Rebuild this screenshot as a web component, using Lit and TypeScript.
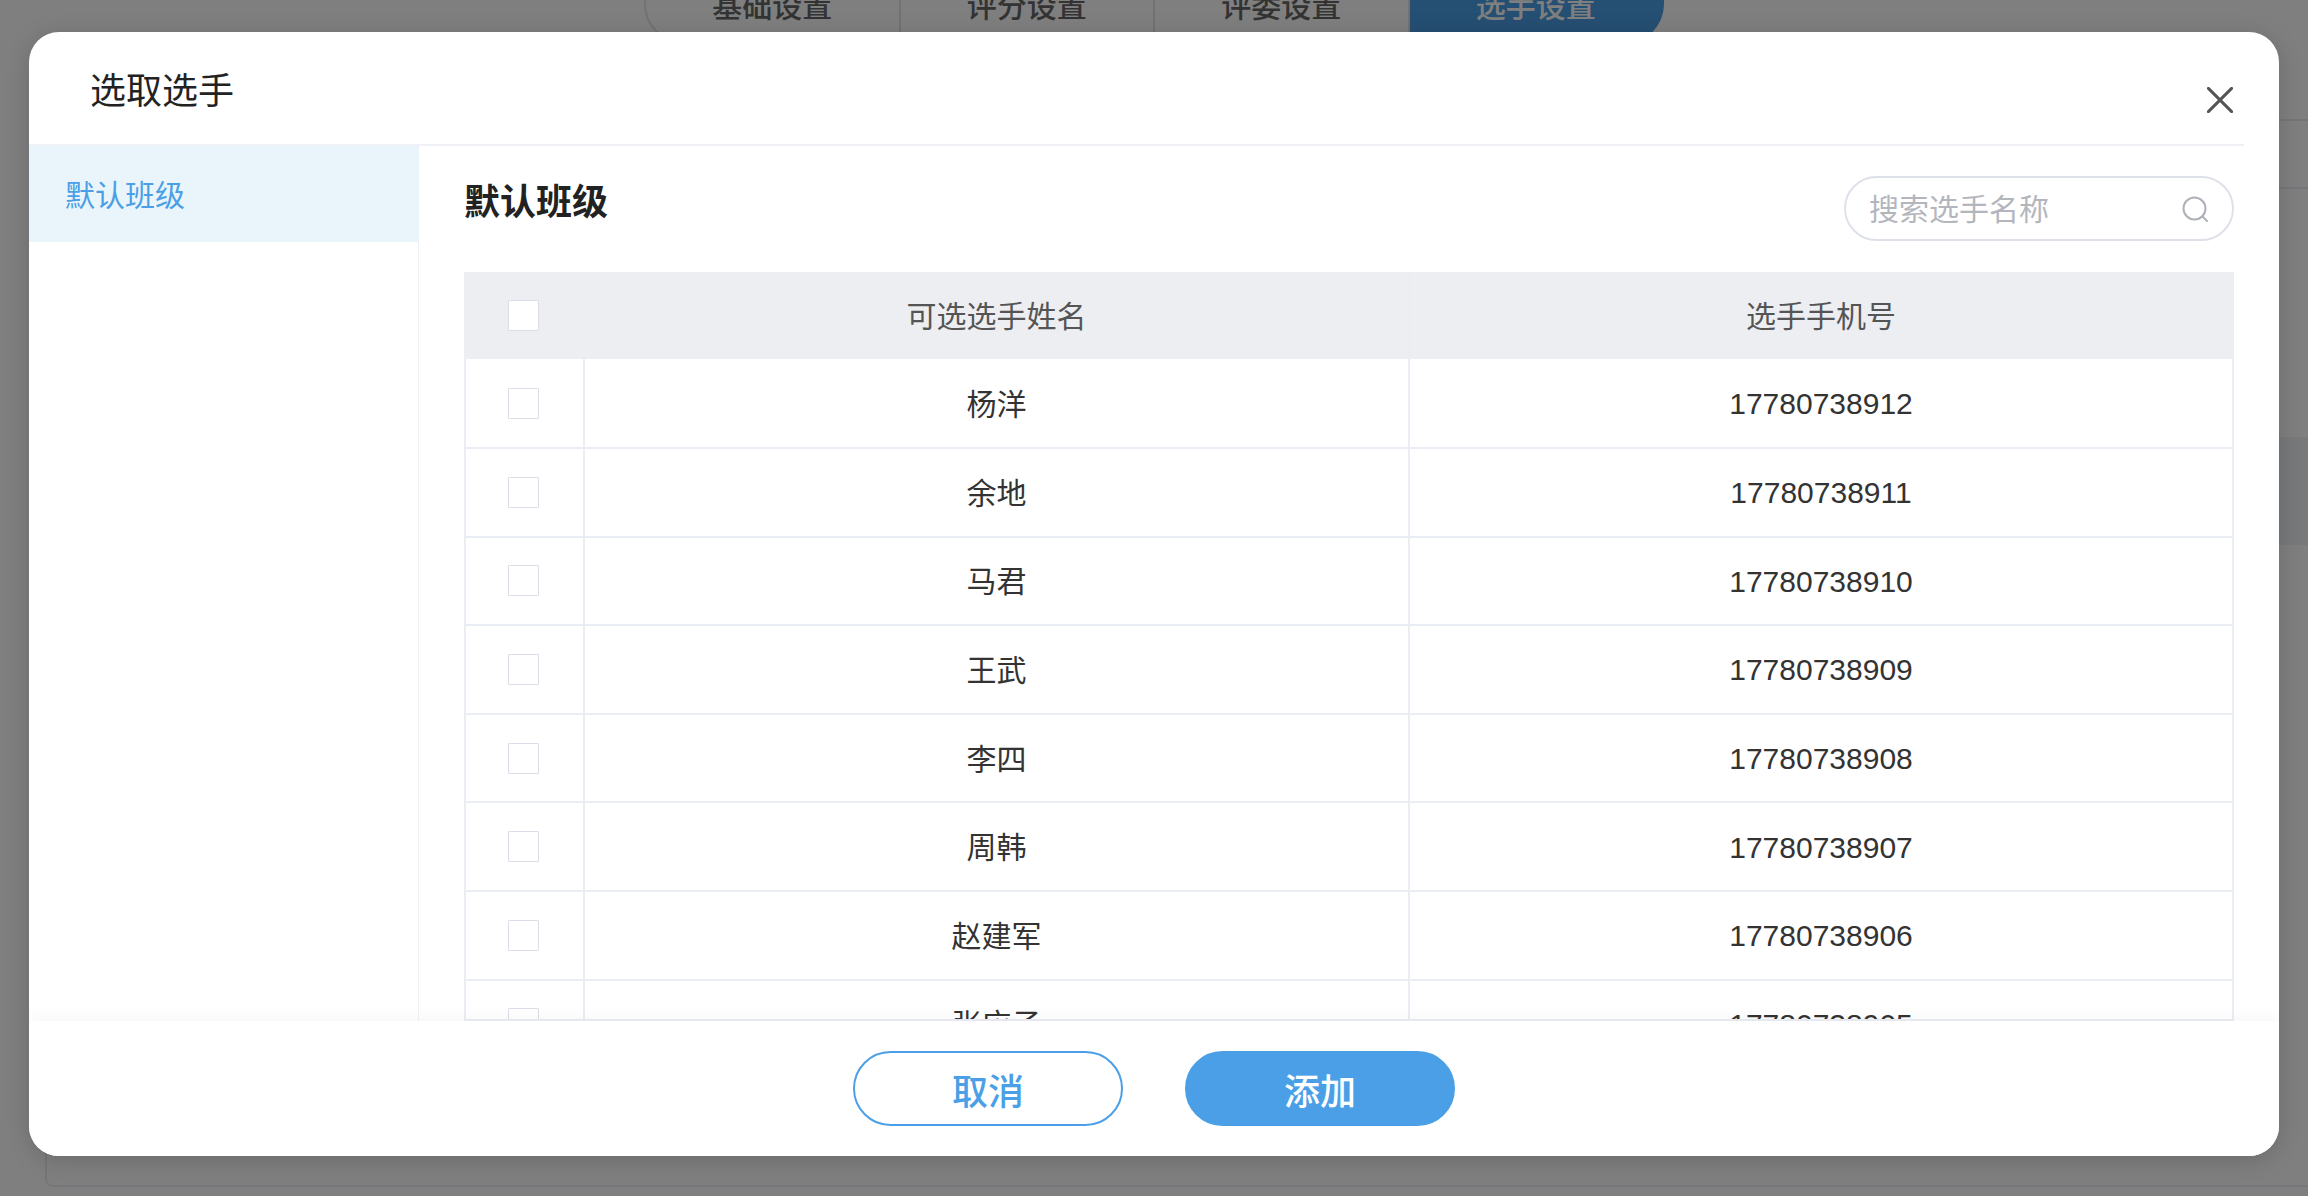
import { LitElement, css, html } from 'lit'
import { customElement } from 'lit/decorators.js'

const players = [
  { name: '杨洋', phone: '17780738912' },
  { name: '余地', phone: '17780738911' },
  { name: '马君', phone: '17780738910' },
  { name: '王武', phone: '17780738909' },
  { name: '李四', phone: '17780738908' },
  { name: '周韩', phone: '17780738907' },
  { name: '赵建军', phone: '17780738906' },
  { name: '张应子', phone: '17780738905' },
]

const tabs = ['基础设置', '评分设置', '评委设置', '选手设置']

@customElement('app-root')
export class AppRoot extends LitElement {
  static styles = css`
    :host {
      display: block;
      font-family: "Liberation Sans", "Noto Sans CJK SC", sans-serif;
    }
    .page {
      position: relative;
      height: 1196px;
      overflow: hidden;
      background: #fff;
    }

    /* page behind the dialog */
    .tabs {
      display: flex;
      margin: -36px 0 0 644px;
      width: 1020px;
      height: 80px;
    }
    .tab {
      flex: 1;
      display: flex;
      align-items: center;
      justify-content: center;
      font-size: 30px;
      font-weight: 500;
      color: #666;
      border: 2px solid #e4e5ea;
      border-left: 0;
    }
    .tab:first-child {
      border-left: 2px solid #e4e5ea;
      border-radius: 0 0 0 40px;
    }
    .tab.active {
      background: #4a9fe6;
      border-color: #4a9fe6;
      color: #fff;
      border-radius: 0 0 40px 0;
    }
    .card {
      margin: 75px 0 0 45px;
      width: 2400px;
      height: 1068px;
      border: 2px solid #ebedf5;
      border-radius: 8px;
      box-sizing: border-box;
    }
    .card-head {
      height: 66px;
      border-bottom: 2px solid #ebedf5;
    }
    .card-row {
      margin-top: 248px;
      height: 108px;
      background: #f0f2f6;
    }

    /* dialog */
    .overlay {
      position: absolute;
      inset: 0;
      background: rgba(0, 0, 0, 0.5);
    }
    .modal {
      position: absolute;
      left: 29px;
      top: 32px;
      width: 2250px;
      height: 1124px;
      display: flex;
      flex-direction: column;
      background: #fff;
      border-radius: 30px;
      overflow: hidden;
      box-shadow: 0 4px 24px rgba(0, 0, 0, 0.16);
    }
    .modal-head {
      flex: none;
      box-sizing: border-box;
      height: 114px;
      margin-right: 35px;
      padding: 0 11px 0 61px;
      display: flex;
      justify-content: space-between;
      border-bottom: 2px solid #f0f1f6;
    }
    .modal-title {
      margin-top: 38px;
      font-size: 36px;
      line-height: 44px;
      color: #222;
    }
    .close {
      margin-top: 55px;
      width: 26px;
      height: 26px;
      color: #555;
    }
    .modal-body {
      flex: 1;
      min-height: 0;
      display: flex;
    }
    .side {
      flex: none;
      width: 390px;
      box-sizing: border-box;
      border-right: 1px solid #f0f1f6;
    }
    .side-item {
      height: 96px;
      width: 390px;
      padding: 0 0 3px 36px;
      box-sizing: border-box;
      display: flex;
      align-items: center;
      font-size: 30px;
      color: #4a9fe6;
      background: #eaf5fb;
    }
    .main {
      flex: 1;
      min-width: 0;
      padding: 30px 45px 0;
      display: flex;
      flex-direction: column;
      gap: 31px;
    }
    .main-top {
      flex: none;
      display: flex;
      align-items: center;
      justify-content: space-between;
    }
    .main-title {
      font-size: 36px;
      font-weight: 700;
      color: #222;
      margin-top: -19px;
    }
    .search {
      box-sizing: border-box;
      width: 390px;
      height: 65px;
      padding: 0 24px 0 23px;
      display: flex;
      align-items: center;
      justify-content: space-between;
      border: 2px solid #dfe1e9;
      border-radius: 33px;
      font-size: 30px;
      color: #b4b6bd;
    }
    .search span {
      padding-bottom: 3px;
    }
    .search svg {
      width: 26px;
      height: 26px;
      color: #aeb0b8;
    }

    .table {
      flex: 1;
      min-height: 0;
      overflow: hidden;
      box-sizing: border-box;
      border-bottom: 2px solid #ebedf5;
    }
    .row {
      display: grid;
      grid-template-columns: 119px 825px 1fr;
      box-sizing: border-box;
      height: 88.6px;
      border: 2px solid #ebedf5;
      border-width: 0 2px 2px;
      font-size: 30px;
      color: #333;
    }
    .row.head {
      height: 87.4px;
      border: 0;
      padding: 0 2px;
      background: #edeef1;
      color: #555;
    }
    .row.head + .row {
      height: 89.6px;
    }
    .cell {
      display: flex;
      align-items: center;
      justify-content: center;
      border-right: 2px solid #ebedf5;
    }
    .cell:last-child {
      border-right: 0;
    }
    .cell.cjk {
      padding-bottom: 3px;
    }
    .cell.num {
      padding-top: 2px;
    }
    .check {
      box-sizing: border-box;
      width: 31px;
      height: 31px;
      margin-right: 2px;
      background: #fff;
      border: 1.5px solid #dcdde6;
      border-radius: 1px;
    }

    .foot {
      flex: none;
      position: relative;
      height: 135px;
      display: flex;
      justify-content: center;
      gap: 62px;
      padding-top: 30px;
      box-sizing: border-box;
      background: #fff;
      box-shadow: 0 -5px 14px rgba(0, 0, 0, 0.03);
    }
    .btn {
      box-sizing: border-box;
      width: 270px;
      height: 75px;
      display: flex;
      align-items: center;
      justify-content: center;
      border: 2px solid #4a9fe6;
      border-radius: 38px;
      font-size: 36px;
      font-weight: 500;
      color: #4a9fe6;
    }
    .btn.primary {
      background: #4a9fe6;
      color: #fff;
    }
  `

  render() {
    return html`
      <div class="page">
        <div class="tabs">
          ${tabs.map((t, i) => html`<div class="tab ${i === 3 ? 'active' : ''}">${t}</div>`)}
        </div>
        <div class="card">
          <div class="card-head"></div>
          <div class="card-row"></div>
        </div>

        <div class="overlay">
          <div class="modal">
            <div class="modal-head">
              <div class="modal-title">选取选手</div>
              <svg class="close" viewBox="0 0 26 26" fill="none" stroke="currentColor" stroke-width="3" stroke-linecap="round">
                <path d="M1.4 1.4 24.6 24.6M24.6 1.4 1.4 24.6"></path>
              </svg>
            </div>
            <div class="modal-body">
              <div class="side">
                <div class="side-item">默认班级</div>
              </div>
              <div class="main">
                <div class="main-top">
                  <div class="main-title">默认班级</div>
                  <div class="search">
                    <span>搜索选手名称</span>
                    <svg viewBox="0 0 26 26" fill="none" stroke="currentColor" stroke-width="2" stroke-linecap="round">
                      <circle cx="12.5" cy="12.5" r="11"></circle>
                      <path d="M20.5 20.5 25 25"></path>
                    </svg>
                  </div>
                </div>
                <div class="table">
                  <div class="row head">
                    <div class="cell"><div class="check"></div></div>
                    <div class="cell cjk">可选选手姓名</div>
                    <div class="cell cjk">选手手机号</div>
                  </div>
                  ${players.map(p => html`
                    <div class="row">
                      <div class="cell"><div class="check"></div></div>
                      <div class="cell cjk">${p.name}</div>
                      <div class="cell num">${p.phone}</div>
                    </div>
                  `)}
                </div>
              </div>
            </div>
            <div class="foot">
              <div class="btn">取消</div>
              <div class="btn primary">添加</div>
            </div>
          </div>
        </div>
      </div>
    `
  }
}
